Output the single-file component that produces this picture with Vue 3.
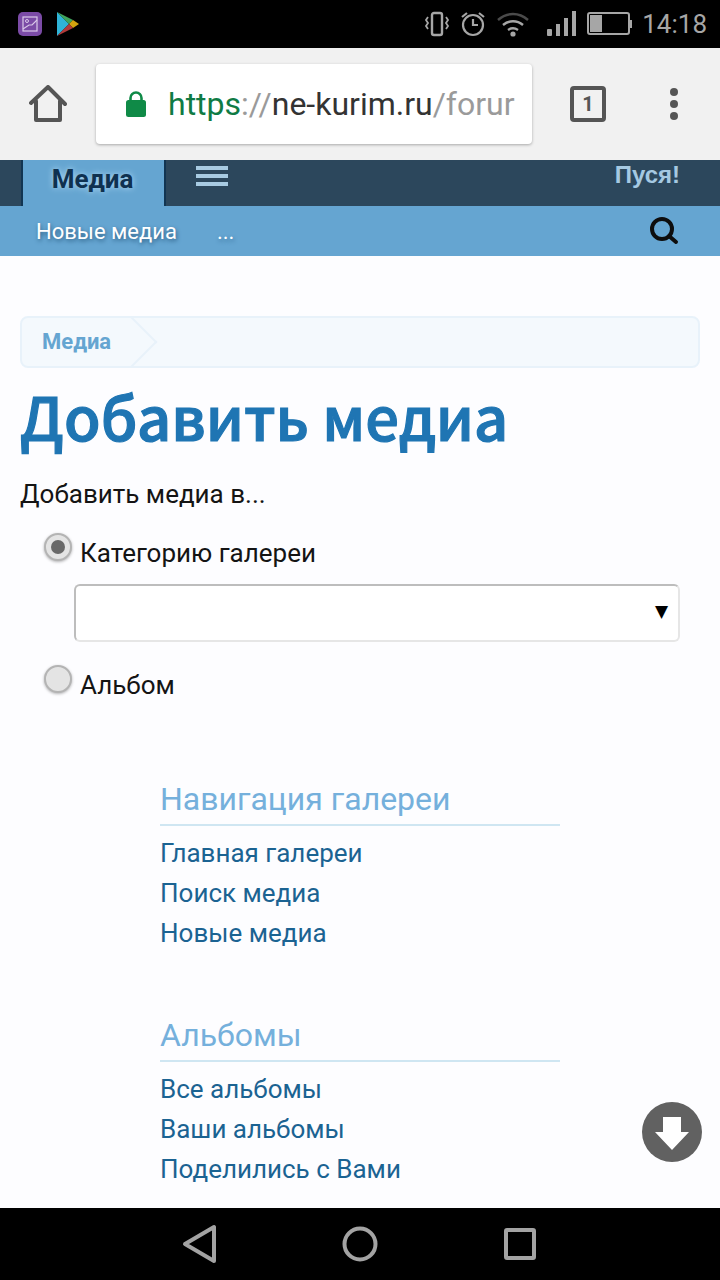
<template>
  <div class="phone">
    <!-- статус бар -->
    <div class="status-bar">
      <div class="status-left">
        <svg width="24" height="24" viewBox="0 0 24 24">
          <rect width="24" height="24" rx="5" fill="#7b4ba6" />
          <rect x="5" y="5" width="14" height="14" fill="none" stroke="#d9c8e8" stroke-width="1.2" />
          <circle cx="9" cy="9" r="1.5" fill="none" stroke="#d9c8e8" stroke-width="1" />
          <path d="M5 17l6-4 3 0 5-5" fill="none" stroke="#d9c8e8" stroke-width="1.2" />
        </svg>
        <svg width="22" height="24" viewBox="0 0 22 24">
          <path d="M0 0l12 12L0 24z" fill="#2fb4d8" />
          <path d="M0 0l16 8-4 4z" fill="#3fa35c" />
          <path d="M16 8l6 4-6 4-4-4z" fill="#d4a30f" />
          <path d="M0 24l12-12 4 4z" fill="#b23a3a" />
        </svg>
      </div>
      <div class="status-right">
        <svg width="26" height="26" viewBox="0 0 26 26" fill="none" stroke="#a6a6a6" stroke-width="2.4">
          <rect x="8" y="2" width="10" height="22" rx="2" />
          <path d="M4 6l-2 3 2 3-2 3 2 3M22 6l2 3-2 3 2 3-2 3" stroke-width="1.8" />
        </svg>
        <svg width="26" height="26" viewBox="0 0 26 26" fill="none" stroke="#a6a6a6" stroke-width="2.2">
          <circle cx="13" cy="14" r="10" />
          <path d="M13 8v6h5M2 6l5-4M24 6l-5-4" />
        </svg>
        <svg class="wifi" width="34" height="26" viewBox="0 0 34 26" fill="none" stroke-width="2.4">
          <path d="M2 9c9-8 21-8 30 0" stroke="#4a4a4a" />
          <path d="M7 14c6-5 14-5 20 0" stroke="#a6a6a6" />
          <path d="M12 19c3-2 7-2 10 0" stroke="#a6a6a6" />
          <circle cx="17" cy="23" r="2.6" fill="#a6a6a6" stroke="none" />
        </svg>
        <svg class="signal" width="30" height="26" viewBox="0 0 30 26" fill="#a6a6a6">
          <rect x="1" y="18" width="5" height="7" rx="1" />
          <rect x="10" y="13" width="4" height="12" />
          <rect x="18" y="7" width="4" height="18" />
          <rect x="26" y="0" width="4" height="25" />
        </svg>
        <svg class="battery" width="46" height="24" viewBox="0 0 46 24" fill="none">
          <rect x="1" y="1" width="41" height="21" rx="2" stroke="#a6a6a6" stroke-width="2" />
          <rect x="3" y="3" width="12" height="17" fill="#a6a6a6" />
          <rect x="43" y="8" width="2" height="8" fill="#a6a6a6" />
        </svg>
        <span class="clock">14:18</span>
      </div>
    </div>

    <!-- панель браузера -->
    <div class="browser-bar">
      <svg class="home" width="38" height="38" viewBox="0 0 38 38" fill="none" stroke="#555" stroke-width="4" stroke-linejoin="round" stroke-linecap="round">
        <path d="M2 18L19 2l17 17" />
        <path d="M7 16v19h24V16" />
      </svg>
      <div class="url-box">
        <svg width="20" height="26" viewBox="0 0 20 26">
          <path d="M4.5 11V7a5.5 5.5 0 0 1 11 0v4" fill="none" stroke="#0f8a47" stroke-width="2.6" />
          <rect y="9" width="20" height="17" rx="2.5" fill="#0f8a47" />
        </svg>
        <span class="url"><span class="scheme">https</span><span class="faint">://</span><span class="host">ne-kurim.ru</span><span class="faint">/forur</span></span>
      </div>
      <div class="tabs-btn">1</div>
      <div class="menu-dots"><i></i><i></i><i></i></div>
    </div>

    <div class="page">
      <!-- навигация форума -->
      <div class="nav-top">
        <div class="nav-tab">Медиа</div>
        <div class="burger"><i></i><i></i><i></i></div>
        <div class="visitor">Пуся!</div>
      </div>
      <div class="nav-sub">
        <span class="sub-link">Новые медиа</span>
        <span class="sub-link more">...</span>
        <svg class="search" width="30" height="30" viewBox="0 0 30 30" fill="none" stroke="#0d0d0d">
          <circle cx="13" cy="13" r="10" stroke-width="4" />
          <path d="M20 20l7 6" stroke-width="4" stroke-linecap="round" />
        </svg>
      </div>

      <div class="content">
        <div class="crumbs">
          <span class="crumb">Медиа</span>
          <span class="crumb-arrow"></span>
        </div>
        <h1>Добавить медиа</h1>
        <div class="lead">Добавить медиа в...</div>

        <div class="option">
          <span class="radio checked"></span>
          <span class="option-label">Категорию галереи</span>
        </div>
        <div class="fake-select"><span class="caret">▼</span></div>
        <div class="option second">
          <span class="radio"></span>
          <span class="option-label">Альбом</span>
        </div>

        <div v-for="block in sideBlocks" :key="block.title" class="side-block">
          <h3>{{ block.title }}</h3>
          <a v-for="link in block.links" :key="link" class="side-link">{{ link }}</a>
        </div>
      </div>

      <div class="scroll-btn">
        <svg width="36" height="36" viewBox="0 0 36 36">
          <path d="M9 3h18v15h8L18 36 1 18h8z" fill="#fff" />
        </svg>
      </div>
    </div>

    <!-- навигация андроида -->
    <div class="android-bar">
      <svg width="36" height="40" viewBox="0 0 36 40" fill="none" stroke="#a3a3a3" stroke-width="4" stroke-linejoin="round">
        <path d="M3 20L32 3v34z" />
      </svg>
      <svg width="36" height="36" viewBox="0 0 36 36" fill="none" stroke="#a3a3a3" stroke-width="4">
        <circle cx="18" cy="18" r="15.5" />
      </svg>
      <svg class="square" width="32" height="32" viewBox="0 0 32 32" fill="none" stroke="#a3a3a3" stroke-width="4" stroke-linejoin="round">
        <rect x="2" y="2" width="28" height="28" rx="1" />
      </svg>
    </div>
  </div>
</template>

<script setup>
const sideBlocks = [
  { title: 'Навигация галереи', links: ['Главная галереи', 'Поиск медиа', 'Новые медиа'] },
  { title: 'Альбомы', links: ['Все альбомы', 'Ваши альбомы', 'Поделились с Вами'] }
]
</script>

<style>
html, body {
  margin: 0;
  background: #000;
}
</style>

<style scoped>
.phone {
  width: 720px;
  height: 1280px;
  display: flex;
  flex-direction: column;
  overflow: hidden;
  font-family: Roboto, "Liberation Sans", sans-serif;
}

.status-bar {
  height: 48px;
  flex: none;
  background: #000;
  display: flex;
  align-items: center;
  justify-content: space-between;
  padding: 0 13px 0 18px;
}

.status-left {
  display: flex;
  align-items: center;
  gap: 15px;
}

.status-right {
  display: flex;
  align-items: center;
  gap: 10px;
}

.wifi {
  margin-right: 0;
}

.signal {
  margin: 0 1px 0 6px;
}

.clock {
  color: #a6a6a6;
  font-size: 26px;
  margin-left: -1px;
}

.browser-bar {
  height: 112px;
  flex: none;
  background: #f1f1f1;
  display: flex;
  align-items: center;
  padding: 0 0 0 29px;
  box-sizing: border-box;
}

.home {
  flex: none;
  margin-right: 29px;
}

.url-box {
  width: 436px;
  height: 80px;
  flex: none;
  box-sizing: border-box;
  background: #fff;
  border-radius: 4px;
  box-shadow: 0 1px 3px rgba(0, 0, 0, 0.3);
  display: flex;
  align-items: center;
  padding-left: 30px;
  gap: 22px;
  overflow: hidden;
}

.url {
  font-size: 32px;
  white-space: nowrap;
  color: #333;
}

.scheme {
  color: #0f7b45;
}

.faint {
  color: #9a9a9a;
}

.tabs-btn {
  width: 36px;
  height: 36px;
  flex: none;
  margin-left: 38px;
  box-sizing: border-box;
  border: 4px solid #555;
  border-radius: 4px;
  color: #555;
  font-size: 20px;
  font-weight: 700;
  display: flex;
  align-items: center;
  justify-content: center;
}

.menu-dots {
  display: flex;
  flex-direction: column;
  gap: 4px;
  margin-left: 64px;
}

.menu-dots i {
  width: 8px;
  height: 8px;
  border-radius: 50%;
  background: #555;
}

.page {
  flex: 1;
  min-height: 0;
  position: relative;
  background: #fdfdff;
  overflow: hidden;
}

.nav-top {
  height: 46px;
  background: #2c475c;
  display: flex;
  align-items: flex-start;
  padding-left: 21px;
}

.nav-tab {
  width: 145px;
  height: 46px;
  box-sizing: border-box;
  background: #65a5d1;
  border-left: 2px solid #123552;
  border-right: 2px solid #123552;
  padding-right: 2px;
  color: #0f3150;
  font-size: 26px;
  font-weight: 700;
  text-align: center;
  line-height: 38px;
  text-shadow: 0 0 6px #b5dcf5;
}

.burger {
  margin: 6px 0 0 30px;
  display: flex;
  flex-direction: column;
  gap: 4px;
}

.burger i {
  display: block;
  width: 32px;
  height: 4px;
  background: #a8cbe2;
}

.visitor {
  margin-left: auto;
  padding-right: 40px;
  color: #a5c9e2;
  font-family: "Liberation Sans", sans-serif;
  font-size: 24px;
  font-weight: 700;
  line-height: 30px;
}

.nav-sub {
  height: 50px;
  background: #65a5d1;
  display: flex;
  align-items: center;
  padding: 0 41px 0 36px;
}

.sub-link {
  color: #fff;
  font-size: 22px;
  text-shadow: 1px 2px 4px #2c5f85;
}

.more {
  margin-left: 40px;
}

.search {
  margin-left: auto;
}

.content {
  padding: 60px 20px 0;
}

.crumbs {
  height: 52px;
  box-sizing: border-box;
  border: 2px solid #e8f2fa;
  border-radius: 8px;
  background: #f4f9fd;
  display: flex;
  align-items: center;
  overflow: hidden;
}

.crumb {
  padding: 0 0 2px 20px;
  color: #65a5d1;
  font-size: 22px;
  font-weight: 700;
}

.crumb-arrow {
  width: 36px;
  height: 36px;
  flex: none;
  box-sizing: border-box;
  border-top: 2px solid #e8f2fa;
  border-right: 2px solid #e8f2fa;
  transform: translateX(3px) rotate(45deg);
}

h1 {
  margin: 12px 0 0;
  color: #1f75b3;
  font-family: "Noto Sans CJK SC", "Noto Sans", sans-serif;
  font-size: 59.6px;
  font-weight: 500;
  -webkit-text-stroke: 1.2px #1f75b3;
  line-height: 70px;
  white-space: nowrap;
}

.lead {
  margin-top: 29px;
  font-size: 26px;
  line-height: 30px;
  color: #141414;
}

.option {
  display: flex;
  align-items: flex-start;
  height: 51px;
  margin: 24px 0 0 24px;
}

.radio {
  width: 28px;
  height: 28px;
  flex: none;
  box-sizing: border-box;
  border: 2px solid #b4b4b4;
  border-radius: 50%;
  background: #e4e4e4;
  box-shadow: 0 1px 3px rgba(0, 0, 0, 0.3);
  position: relative;
}

.checked::after {
  content: "";
  position: absolute;
  left: 5px;
  top: 5px;
  width: 14px;
  height: 14px;
  border-radius: 50%;
  background: #696969;
}

.option-label {
  margin: 5px 0 0 8px;
  font-size: 26px;
  line-height: 30px;
  color: #141414;
}

.fake-select {
  width: 606px;
  height: 58px;
  margin-left: 54px;
  box-sizing: border-box;
  background: #fff;
  border: 2px solid #e6e6e6;
  border-top-color: #bdbdbd;
  border-left-color: #bdbdbd;
  border-radius: 6px;
  display: flex;
  align-items: center;
  justify-content: flex-end;
  padding: 0 10px 4px 0;
}

.caret {
  font-family: "DejaVu Sans", sans-serif;
  font-size: 17px;
  color: #000;
}

.option.second {
  margin-top: 23px;
}

.side-block {
  width: 400px;
  margin: 0 0 63px 140px;
}

.option.second + .side-block {
  margin-top: 64px;
}

.side-block h3 {
  margin: 0 0 7px;
  height: 46px;
  box-sizing: border-box;
  border-bottom: 2px solid #cfe6f2;
  color: #75b0dc;
  font-size: 32px;
  font-weight: 400;
  line-height: 38px;
}

.side-link {
  display: block;
  height: 40px;
  color: #1b6392;
  font-size: 26px;
  line-height: 40px;
}

.scroll-btn {
  position: absolute;
  left: 642px;
  top: 942px;
  width: 60px;
  height: 60px;
  border-radius: 50%;
  background: #616161;
  display: flex;
  align-items: center;
  justify-content: center;
}

.android-bar {
  height: 72px;
  flex: none;
  background: #000;
  display: flex;
  align-items: center;
  justify-content: center;
  gap: 124px;
  padding-right: 2px;
}

.square {
  margin-left: 2px;
}
</style>
